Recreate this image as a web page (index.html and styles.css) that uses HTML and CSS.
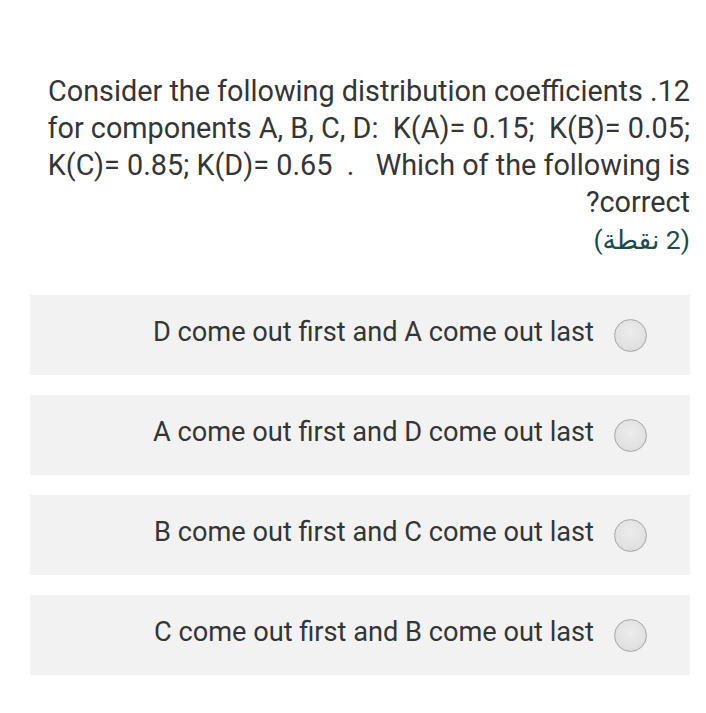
FILE: index.html
```html
<!DOCTYPE html>
<html>
<head>
<meta charset="utf-8">
<link rel="stylesheet" href="styles.css">
</head>
<body>
<div class="page">
  <div class="question">
    <p class="qtext">Consider the following distribution coefficients .12<br>for components A, B, C, D:&nbsp; K(A)= 0.15;&nbsp; K(B)= 0.05;<br>K(C)= 0.85; K(D)= 0.65&nbsp; .&nbsp;&nbsp; Which of the following is<br>?correct</p>
    <p class="points"><span dir="rtl">(2 نقطة)</span></p>
  </div>
  <div class="options">
    <label class="option"><span class="otext">D come out first and A come out last</span><span class="radio"></span></label>
    <label class="option"><span class="otext">A come out first and D come out last</span><span class="radio"></span></label>
    <label class="option"><span class="otext">B come out first and C come out last</span><span class="radio"></span></label>
    <label class="option"><span class="otext">C come out first and B come out last</span><span class="radio"></span></label>
  </div>
</div>
</body>
</html>
```
FILE: styles.css
```css
html, body {
  margin: 0;
  padding: 0;
  background: #ffffff;
}
.page {
  width: 706px;
  height: 713px;
  font-family: Roboto, "DejaVu Sans", sans-serif;
  color: #353535;
  padding: 73px 16px 0 30px;
  box-sizing: border-box;
}
.question {
  text-align: right;
}
.qtext {
  margin: 0;
  font-size: 28.8px;
  line-height: 37px;
}
.points {
  margin: 0;
  font-size: 26.5px;
  line-height: 37px;
  color: #1c4b4b;
}
.options {
  margin-top: 37px;
  display: flex;
  flex-direction: column;
  gap: 20px;
}
.option {
  height: 80px;
  background: #f2f2f2;
  display: flex;
  align-items: center;
  justify-content: flex-end;
  padding-right: 43px;
  font-size: 27.2px;
}
.otext {
  margin-right: 20px;
  margin-top: -6px;
}
.radio {
  width: 31px;
  height: 31px;
  border-radius: 50%;
  border: 1px solid #a9a9a9;
  background: radial-gradient(circle at 50% 40%, #ececec 0%, #e2e2e2 60%, #d6d6d6 100%);
  box-shadow: inset 0 0 1px #c0c0c0;
}
```
